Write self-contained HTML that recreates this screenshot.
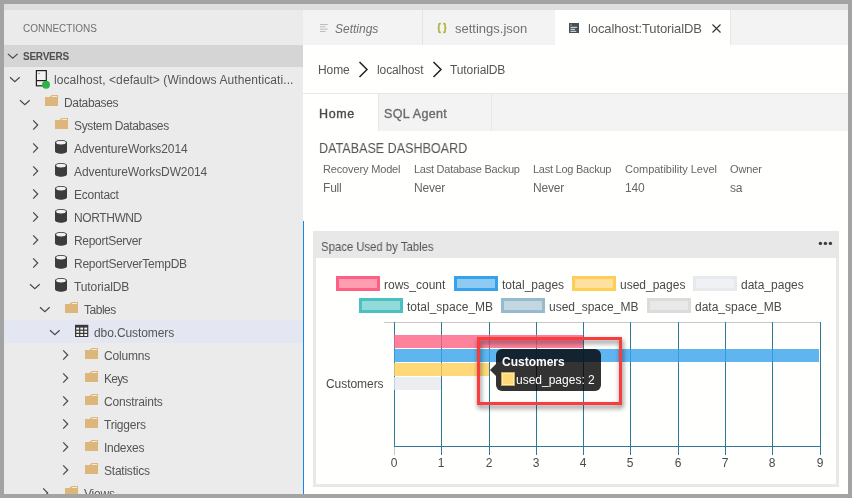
<!DOCTYPE html>
<html><head><meta charset="utf-8">
<style>
*{box-sizing:border-box;margin:0;padding:0}
html,body{width:852px;height:498px;overflow:hidden;background:#fff}
body{position:relative;font-family:"Liberation Sans",sans-serif;color:#555}
.m{will-change:transform}
.a{position:absolute}
.bd{position:absolute;background:#a3a3a3;z-index:50}
#band{left:0;top:0;width:852px;height:10px;background:#dedede}
#side{left:0;top:10px;width:303px;height:488px;background:#ebebeb}
#conn{left:23px;top:23px;font-size:10px;color:#6f6f6f}
#servers{left:0;top:45px;width:303px;height:22px;background:#d5d5d5}
#servers span{position:absolute;left:23px;top:6px;font-size:10px;font-weight:bold;letter-spacing:-0.25px;color:#505050}
.row{position:absolute;left:0;width:303px;height:23px}
.row.sel{background:#e4e6f1}
.row .rs{position:absolute;left:0;top:0;overflow:visible}
.row .lbl{position:absolute;top:6px;font-size:12px;letter-spacing:-0.1px;color:#555;white-space:nowrap}
#editor{left:303px;top:10px;width:549px;height:488px;background:#fffffe}
#tabs{left:303px;top:10px;width:549px;height:35px;background:#f3f3f3}
.tab{position:absolute;top:10px;height:35px}
.tabtxt{position:absolute;top:21px;font-size:13px;color:#707070;white-space:nowrap}
#bluel{left:303px;top:221px;width:1px;height:277px;background:#1a85e8}
.bc{position:absolute;top:63px;font-size:12px;letter-spacing:-0.1px;color:#555;white-space:nowrap}
#dtabs{left:303px;top:93px;width:549px;height:38px;background:#f3f3f3;border-top:1px solid #e8e8e8}
.dtab{position:absolute;top:107px;font-size:12.5px;font-weight:normal;-webkit-text-stroke:0.35px currentColor;white-space:nowrap}
.prop{position:absolute;font-size:11px;letter-spacing:-0.15px;color:#666;white-space:nowrap}
.val{position:absolute;top:181px;font-size:12px;letter-spacing:-0.2px;color:#666;white-space:nowrap}
#panel{left:313px;top:231px;width:526px;height:256px;background:#e8e8e8}
#pin{left:316px;top:258px;width:520px;height:226px;background:#fffffe}
#ptitle{left:321px;top:240px;font-size:12.6px;color:#555;white-space:nowrap;transform:scaleX(0.9);transform-origin:0 0}
.dot{position:absolute;top:242px;width:4px;height:4px;border-radius:50%;background:#424242}
.lg{position:absolute;width:44px;height:15px;border:3px solid}
.lt{position:absolute;font-size:12px;color:#4a4a4a;white-space:nowrap}
.gl{position:absolute;width:1px;background:#2e7a98}
.xl{position:absolute;top:456px;font-size:12px;color:#4a4a4a;width:20px;text-align:center}
.bar{position:absolute;left:394px;height:13px}
</style></head><body>
<svg width="0" height="0" style="position:absolute">
<defs>
<symbol id="tw-down" viewBox="0 0 11 11"><path d="M0.5 3 L5.5 8 L10.5 3" fill="none" stroke="#424242" stroke-width="1.1"/></symbol>
<symbol id="tw-right" viewBox="0 0 11 11"><path d="M3 0.5 L8 5.5 L3 10.5" fill="none" stroke="#424242" stroke-width="1.1"/></symbol>
<symbol id="ic-folder" viewBox="0 0 16 16"><path d="M2 4 H6.5 L8 2 H15 V13 H2 Z" fill="#dcb67a" stroke="#f4f4f4" stroke-width="0.8"/><path d="M8.6 3.4 H14" stroke="#f6f1e6" stroke-width="1.1"/></symbol>
<symbol id="ic-db" viewBox="0 0 16 16"><path d="M2 3.5 C2 1.5 14 1.5 14 3.5 V14 C14 16.4 2 16.4 2 14 Z" fill="#3c3c3c" stroke="#f4f4f4" stroke-width="0.6"/><ellipse cx="8" cy="3.9" rx="5" ry="1.6" fill="#f2f2f2"/></symbol>
<symbol id="ic-server" viewBox="0 0 16 16"><rect x="3" y="0.5" width="10" height="15" fill="none" stroke="#2a2a2a" stroke-width="1.2"/><path d="M3 10.5 H13" stroke="#2a2a2a" stroke-width="1.2"/><rect x="5" y="2.5" width="1" height="1" fill="#555"/><circle cx="12.5" cy="15" r="4" fill="#2dae4a"/></symbol>
<symbol id="ic-table" viewBox="0 0 16 16"><rect x="2" y="3" width="13" height="12" fill="#3c3c3c" stroke="#f6f6f6" stroke-width="0.6"/><g fill="#f0f0f0"><rect x="3.2" y="6" width="3" height="2"/><rect x="7.2" y="6" width="3" height="2"/><rect x="11.2" y="6" width="3" height="2"/><rect x="3.2" y="9" width="3" height="2"/><rect x="7.2" y="9" width="3" height="2"/><rect x="11.2" y="9" width="3" height="2"/><rect x="3.2" y="12" width="3" height="2"/><rect x="7.2" y="12" width="3" height="2"/><rect x="11.2" y="12" width="3" height="2"/></g></symbol>
</defs></svg>

<div id="band" class="a"></div>
<div id="side" class="a"></div>
<div id="conn" class="a m">CONNECTIONS</div>
<div id="servers" class="a"><svg class="a" style="left:0;top:0;width:30px;height:22px;overflow:visible"><path d="M7.9 8.9 L12.75 13.3 L17.6 8.9" fill="none" stroke="#484848" stroke-width="1.2"/></svg><span class="m">SERVERS</span></div>
<div class="row" style="top:67px"><svg class="rs" width="303" height="23"><path d="M10 10.2 L14.85 14.6 L19.7 10.2" fill="none" stroke="#484848" stroke-width="1.2"/><g transform="translate(35.8,0)"><rect x="0.6" y="3.6" width="9.9" height="15.2" fill="#f2f2f2" stroke="#1e1e1e" stroke-width="1.2"/><path d="M0.6 13.6 H10.5" stroke="#1e1e1e" stroke-width="1.2"/><circle cx="3.2" cy="6.5" r="0.8" fill="#888"/><circle cx="10.2" cy="17.8" r="4" fill="#2db24a"/></g></svg><span class="m lbl" style="left:54px;letter-spacing:0.09px">localhost, &lt;default&gt; (Windows Authenticati...</span></div>
<div class="row" style="top:90px"><svg class="rs" width="303" height="23"><path d="M20 10.2 L24.85 14.6 L29.7 10.2" fill="none" stroke="#484848" stroke-width="1.2"/><g transform="translate(45,0)"><path d="M0 7 H4.6 L6.6 5 H13 V16 H0 Z" fill="#dcb67a"/><path d="M6.9 6.5 H12" stroke="#f3ecdc" stroke-width="1"/></g></svg><span class="m lbl" style="left:64px;letter-spacing:-0.35px">Databases</span></div>
<div class="row" style="top:113px"><svg class="rs" width="303" height="23"><path d="M33.2 7.4 L37.7 12 L33.2 16.6" fill="none" stroke="#484848" stroke-width="1.2"/><g transform="translate(55,0)"><path d="M0 7 H4.6 L6.6 5 H13 V16 H0 Z" fill="#dcb67a"/><path d="M6.9 6.5 H12" stroke="#f3ecdc" stroke-width="1"/></g></svg><span class="m lbl" style="left:74px;letter-spacing:-0.37px">System Databases</span></div>
<div class="row" style="top:136px"><svg class="rs" width="303" height="23"><path d="M33.2 7.4 L37.7 12 L33.2 16.6" fill="none" stroke="#484848" stroke-width="1.2"/><g transform="translate(55,0)"><path d="M0 6.7 C0 3.2 12 3.2 12 6.7 V15 C12 18.6 0 18.6 0 15 Z" fill="#3c3c3c"/><ellipse cx="6" cy="6.6" rx="4.9" ry="1.9" fill="#f2f2f2"/></g></svg><span class="m lbl" style="left:74px;letter-spacing:-0.09px">AdventureWorks2014</span></div>
<div class="row" style="top:159px"><svg class="rs" width="303" height="23"><path d="M33.2 7.4 L37.7 12 L33.2 16.6" fill="none" stroke="#484848" stroke-width="1.2"/><g transform="translate(55,0)"><path d="M0 6.7 C0 3.2 12 3.2 12 6.7 V15 C12 18.6 0 18.6 0 15 Z" fill="#3c3c3c"/><ellipse cx="6" cy="6.6" rx="4.9" ry="1.9" fill="#f2f2f2"/></g></svg><span class="m lbl" style="left:74px;letter-spacing:-0.10px">AdventureWorksDW2014</span></div>
<div class="row" style="top:182px"><svg class="rs" width="303" height="23"><path d="M33.2 7.4 L37.7 12 L33.2 16.6" fill="none" stroke="#484848" stroke-width="1.2"/><g transform="translate(55,0)"><path d="M0 6.7 C0 3.2 12 3.2 12 6.7 V15 C12 18.6 0 18.6 0 15 Z" fill="#3c3c3c"/><ellipse cx="6" cy="6.6" rx="4.9" ry="1.9" fill="#f2f2f2"/></g></svg><span class="m lbl" style="left:74px;letter-spacing:-0.26px">Econtact</span></div>
<div class="row" style="top:205px"><svg class="rs" width="303" height="23"><path d="M33.2 7.4 L37.7 12 L33.2 16.6" fill="none" stroke="#484848" stroke-width="1.2"/><g transform="translate(55,0)"><path d="M0 6.7 C0 3.2 12 3.2 12 6.7 V15 C12 18.6 0 18.6 0 15 Z" fill="#3c3c3c"/><ellipse cx="6" cy="6.6" rx="4.9" ry="1.9" fill="#f2f2f2"/></g></svg><span class="m lbl" style="left:74px;letter-spacing:-0.41px">NORTHWND</span></div>
<div class="row" style="top:228px"><svg class="rs" width="303" height="23"><path d="M33.2 7.4 L37.7 12 L33.2 16.6" fill="none" stroke="#484848" stroke-width="1.2"/><g transform="translate(55,0)"><path d="M0 6.7 C0 3.2 12 3.2 12 6.7 V15 C12 18.6 0 18.6 0 15 Z" fill="#3c3c3c"/><ellipse cx="6" cy="6.6" rx="4.9" ry="1.9" fill="#f2f2f2"/></g></svg><span class="m lbl" style="left:74px;letter-spacing:-0.30px">ReportServer</span></div>
<div class="row" style="top:251px"><svg class="rs" width="303" height="23"><path d="M33.2 7.4 L37.7 12 L33.2 16.6" fill="none" stroke="#484848" stroke-width="1.2"/><g transform="translate(55,0)"><path d="M0 6.7 C0 3.2 12 3.2 12 6.7 V15 C12 18.6 0 18.6 0 15 Z" fill="#3c3c3c"/><ellipse cx="6" cy="6.6" rx="4.9" ry="1.9" fill="#f2f2f2"/></g></svg><span class="m lbl" style="left:74px;letter-spacing:-0.25px">ReportServerTempDB</span></div>
<div class="row" style="top:274px"><svg class="rs" width="303" height="23"><path d="M30 10.2 L34.85 14.6 L39.7 10.2" fill="none" stroke="#484848" stroke-width="1.2"/><g transform="translate(55,0)"><path d="M0 6.7 C0 3.2 12 3.2 12 6.7 V15 C12 18.6 0 18.6 0 15 Z" fill="#3c3c3c"/><ellipse cx="6" cy="6.6" rx="4.9" ry="1.9" fill="#f2f2f2"/></g></svg><span class="m lbl" style="left:74px;letter-spacing:-0.10px">TutorialDB</span></div>
<div class="row" style="top:297px"><svg class="rs" width="303" height="23"><path d="M40 10.2 L44.85 14.6 L49.7 10.2" fill="none" stroke="#484848" stroke-width="1.2"/><g transform="translate(65,0)"><path d="M0 7 H4.6 L6.6 5 H13 V16 H0 Z" fill="#dcb67a"/><path d="M6.9 6.5 H12" stroke="#f3ecdc" stroke-width="1"/></g></svg><span class="m lbl" style="left:84px;letter-spacing:-0.48px">Tables</span></div>
<div class="row sel" style="top:320px"><svg class="rs" width="303" height="23"><path d="M50 10.2 L54.85 14.6 L59.7 10.2" fill="none" stroke="#484848" stroke-width="1.2"/><g transform="translate(75,0)"><rect x="0" y="4.8" width="13.3" height="12.2" fill="#383838"/><rect x="1.3" y="7.6" width="2.8" height="2" fill="#f4f4f4"/><rect x="5.3" y="7.6" width="2.8" height="2" fill="#f4f4f4"/><rect x="9.3" y="7.6" width="2.8" height="2" fill="#f4f4f4"/><rect x="1.3" y="10.8" width="2.8" height="2" fill="#f4f4f4"/><rect x="5.3" y="10.8" width="2.8" height="2" fill="#f4f4f4"/><rect x="9.3" y="10.8" width="2.8" height="2" fill="#f4f4f4"/><rect x="1.3" y="14.0" width="2.8" height="2" fill="#f4f4f4"/><rect x="5.3" y="14.0" width="2.8" height="2" fill="#f4f4f4"/><rect x="9.3" y="14.0" width="2.8" height="2" fill="#f4f4f4"/></g></svg><span class="m lbl" style="left:94px;letter-spacing:-0.10px">dbo.Customers</span></div>
<div class="row" style="top:343px"><svg class="rs" width="303" height="23"><path d="M63.2 7.4 L67.7 12 L63.2 16.6" fill="none" stroke="#484848" stroke-width="1.2"/><g transform="translate(85,0)"><path d="M0 7 H4.6 L6.6 5 H13 V16 H0 Z" fill="#dcb67a"/><path d="M6.9 6.5 H12" stroke="#f3ecdc" stroke-width="1"/></g></svg><span class="m lbl" style="left:104px;letter-spacing:-0.18px">Columns</span></div>
<div class="row" style="top:366px"><svg class="rs" width="303" height="23"><path d="M63.2 7.4 L67.7 12 L63.2 16.6" fill="none" stroke="#484848" stroke-width="1.2"/><g transform="translate(85,0)"><path d="M0 7 H4.6 L6.6 5 H13 V16 H0 Z" fill="#dcb67a"/><path d="M6.9 6.5 H12" stroke="#f3ecdc" stroke-width="1"/></g></svg><span class="m lbl" style="left:104px;letter-spacing:-0.77px">Keys</span></div>
<div class="row" style="top:389px"><svg class="rs" width="303" height="23"><path d="M63.2 7.4 L67.7 12 L63.2 16.6" fill="none" stroke="#484848" stroke-width="1.2"/><g transform="translate(85,0)"><path d="M0 7 H4.6 L6.6 5 H13 V16 H0 Z" fill="#dcb67a"/><path d="M6.9 6.5 H12" stroke="#f3ecdc" stroke-width="1"/></g></svg><span class="m lbl" style="left:104px;letter-spacing:-0.19px">Constraints</span></div>
<div class="row" style="top:412px"><svg class="rs" width="303" height="23"><path d="M63.2 7.4 L67.7 12 L63.2 16.6" fill="none" stroke="#484848" stroke-width="1.2"/><g transform="translate(85,0)"><path d="M0 7 H4.6 L6.6 5 H13 V16 H0 Z" fill="#dcb67a"/><path d="M6.9 6.5 H12" stroke="#f3ecdc" stroke-width="1"/></g></svg><span class="m lbl" style="left:104px;letter-spacing:-0.23px">Triggers</span></div>
<div class="row" style="top:435px"><svg class="rs" width="303" height="23"><path d="M63.2 7.4 L67.7 12 L63.2 16.6" fill="none" stroke="#484848" stroke-width="1.2"/><g transform="translate(85,0)"><path d="M0 7 H4.6 L6.6 5 H13 V16 H0 Z" fill="#dcb67a"/><path d="M6.9 6.5 H12" stroke="#f3ecdc" stroke-width="1"/></g></svg><span class="m lbl" style="left:104px;letter-spacing:-0.27px">Indexes</span></div>
<div class="row" style="top:458px"><svg class="rs" width="303" height="23"><path d="M63.2 7.4 L67.7 12 L63.2 16.6" fill="none" stroke="#484848" stroke-width="1.2"/><g transform="translate(85,0)"><path d="M0 7 H4.6 L6.6 5 H13 V16 H0 Z" fill="#dcb67a"/><path d="M6.9 6.5 H12" stroke="#f3ecdc" stroke-width="1"/></g></svg><span class="m lbl" style="left:104px;letter-spacing:-0.23px">Statistics</span></div>
<div class="row" style="top:481px"><svg class="rs" width="303" height="23"><path d="M43.2 7.4 L47.7 12 L43.2 16.6" fill="none" stroke="#484848" stroke-width="1.2"/><g transform="translate(65,0)"><path d="M0 7 H4.6 L6.6 5 H13 V16 H0 Z" fill="#dcb67a"/><path d="M6.9 6.5 H12" stroke="#f3ecdc" stroke-width="1"/></g></svg><span class="m lbl" style="left:84px;letter-spacing:-0.20px">Views</span></div>

<div id="editor" class="a"></div>
<div id="tabs" class="a"></div>
<!-- settings tab -->
<div class="a" style="left:422px;top:10px;width:1px;height:35px;background:#e4e4e4"></div>
<svg class="a" style="left:319px;top:23px;width:10px;height:10px" viewBox="0 0 10 10"><path d="M1 1.5H8.7M1 3.8H6.5M1 6.2H8.7M1 8.5H6.5" stroke="#bcbcbc" stroke-width="1"/></svg>
<div class="tabtxt m" style="left:335px;top:22px;font-style:italic;font-size:12px">Settings</div>
<svg class="a" style="left:436px;top:22px;width:12px;height:12px" viewBox="0 0 12 12"><path d="M4.8 1.6 H4 Q2.9 1.6 2.9 2.7 V4.9 Q2.9 6 1.6 6 Q2.9 6 2.9 7.1 V9.3 Q2.9 10.4 4 10.4 H4.8 M7.2 1.6 H8 Q9.1 1.6 9.1 2.7 V4.9 Q9.1 6 10.4 6 Q9.1 6 9.1 7.1 V9.3 Q9.1 10.4 8 10.4 H7.2" fill="none" stroke="#b0b232" stroke-width="1.6"/></svg>
<div class="tabtxt m" style="left:455px">settings.json</div>
<div class="a" style="left:555px;top:10px;width:175px;height:35px;background:#fffffe"></div>
<svg class="a" style="left:569px;top:23px;width:10px;height:10px" viewBox="0 0 10 10"><rect x="0" y="0" width="10" height="10" fill="#465057"/><path d="M1.5 2H2.5M1.5 4.3H8M1.5 6.3H6M1.5 8.3H7.3" stroke="#fff" stroke-width="0.9"/></svg>
<div class="tabtxt m" style="left:588px;color:#5a5a5a;letter-spacing:-0.1px">localhost:TutorialDB</div>
<div class="a" style="left:730px;top:10px;width:1px;height:35px;background:#e6e6e6"></div>
<svg class="a" style="left:712px;top:24px;width:9px;height:9px" viewBox="0 0 9 9"><path d="M0.5 0.5L8.5 8.5M8.5 0.5L0.5 8.5" stroke="#333" stroke-width="1.1"/></svg>

<!-- breadcrumb -->
<div class="bc m" style="left:318px">Home</div>
<svg class="a" style="left:358px;top:61px;width:11px;height:17px" viewBox="0 0 11 17"><path d="M1.5 1 L9 8.5 L1.5 16" fill="none" stroke="#222" stroke-width="1.5"/></svg>
<div class="bc m" style="left:377px">localhost</div>
<svg class="a" style="left:432px;top:61px;width:11px;height:17px" viewBox="0 0 11 17"><path d="M1.5 1 L9 8.5 L1.5 16" fill="none" stroke="#222" stroke-width="1.5"/></svg>
<div class="bc m" style="left:450px">TutorialDB</div>

<!-- dashboard tabs -->
<div id="dtabs" class="a"></div>
<div class="a" style="left:303px;top:94px;width:75px;height:37px;background:#fffffe"></div>
<div class="a" style="left:378px;top:94px;width:1px;height:37px;background:#e6e6e6"></div>
<div class="a" style="left:491px;top:94px;width:1px;height:37px;background:#e6e6e6"></div>
<div class="dtab m" style="left:319px;color:#4a4a4a;letter-spacing:0.6px">Home</div>
<div class="dtab m" style="left:384px;color:#6a6a6a;letter-spacing:0.35px">SQL Agent</div>

<div class="a m" style="left:319px;top:140px;font-size:14.2px;color:#555;transform:scaleX(0.885);transform-origin:0 0">DATABASE DASHBOARD</div>
<div class="prop m" style="left:323px;top:163px">Recovery Model</div>
<div class="prop m" style="left:414px;top:163px;letter-spacing:-0.25px">Last Database Backup</div>
<div class="prop m" style="left:533px;top:163px;letter-spacing:-0.25px">Last Log Backup</div>
<div class="prop m" style="left:625px;top:163px;letter-spacing:-0.02px">Compatibility Level</div>
<div class="prop m" style="left:730px;top:163px">Owner</div>
<div class="val m" style="left:323px">Full</div>
<div class="val m" style="left:414px">Never</div>
<div class="val m" style="left:533px">Never</div>
<div class="val m" style="left:625px">140</div>
<div class="val m" style="left:730px">sa</div>

<div id="bluel" class="a"></div>

<!-- chart panel -->
<div id="panel" class="a"></div>
<div id="pin" class="a"></div>
<div id="ptitle" class="a m">Space Used by Tables</div>
<svg class="a" style="left:815px;top:238px;width:20px;height:12px" viewBox="0 0 20 12"><circle cx="5.4" cy="5.4" r="1.7" fill="#3c3c3c"/><circle cx="10.4" cy="5.4" r="1.7" fill="#3c3c3c"/><circle cx="15.4" cy="5.4" r="1.7" fill="#3c3c3c"/></svg>

<!-- legend -->
<div class="lg" style="left:336px;top:276px;border-color:#ff5f82;background:#ff9db1"></div>
<div class="lt m" style="left:384px;top:278px">rows_count</div>
<div class="lg" style="left:454px;top:276px;border-color:#36a2eb;background:#8fcaf3"></div>
<div class="lt m" style="left:502px;top:278px">total_pages</div>
<div class="lg" style="left:572px;top:276px;border-color:#ffce56;background:#ffe19f"></div>
<div class="lt m" style="left:620px;top:278px">used_pages</div>
<div class="lg" style="left:693px;top:276px;border-color:#e7e9ed;background:#f0f1f4"></div>
<div class="lt m" style="left:741px;top:278px">data_pages</div>
<div class="lg" style="left:359px;top:298px;border-color:#4bc0c0;background:#93dbdb"></div>
<div class="lt m" style="left:407px;top:300px">total_space_MB</div>
<div class="lg" style="left:501px;top:298px;border-color:#97bbcd;background:#c2d7e2"></div>
<div class="lt m" style="left:549px;top:300px">used_space_MB</div>
<div class="lg" style="left:647px;top:298px;border-color:#dcdcdc;background:#e9e9e9"></div>
<div class="lt m" style="left:695px;top:300px">data_space_MB</div>

<!-- chart -->
<div class="a" style="left:384px;top:322px;width:437px;height:1px;background:#c8c8c8"></div>
<div class="gl" style="left:394px;top:322px;height:124px"></div>
<div class="a" style="left:394px;top:446px;width:1px;height:9px;background:#c8c8c8"></div>
<div class="gl" style="left:441px;top:322px;height:124px"></div>
<div class="a" style="left:441px;top:446px;width:1px;height:9px;background:#2e7a98"></div>
<div class="gl" style="left:489px;top:322px;height:124px"></div>
<div class="a" style="left:489px;top:446px;width:1px;height:9px;background:#2e7a98"></div>
<div class="gl" style="left:536px;top:322px;height:124px"></div>
<div class="a" style="left:536px;top:446px;width:1px;height:9px;background:#2e7a98"></div>
<div class="gl" style="left:583px;top:322px;height:124px"></div>
<div class="a" style="left:583px;top:446px;width:1px;height:9px;background:#2e7a98"></div>
<div class="gl" style="left:630px;top:322px;height:124px"></div>
<div class="a" style="left:630px;top:446px;width:1px;height:9px;background:#2e7a98"></div>
<div class="gl" style="left:678px;top:322px;height:124px"></div>
<div class="a" style="left:678px;top:446px;width:1px;height:9px;background:#2e7a98"></div>
<div class="gl" style="left:725px;top:322px;height:124px"></div>
<div class="a" style="left:725px;top:446px;width:1px;height:9px;background:#2e7a98"></div>
<div class="gl" style="left:772px;top:322px;height:124px"></div>
<div class="a" style="left:772px;top:446px;width:1px;height:9px;background:#2e7a98"></div>
<div class="gl" style="left:820px;top:322px;height:124px"></div>
<div class="a" style="left:820px;top:446px;width:1px;height:9px;background:#2e7a98"></div>
<div class="a" style="left:394px;top:446px;width:427px;height:1px;background:#2e7a98"></div>
<div class="bar" style="top:335px;width:189px;background:rgba(255,99,132,0.8)"></div>
<div class="bar" style="top:349px;width:425px;background:rgba(54,162,235,0.8)"></div>
<div class="bar" style="top:363px;width:95px;background:rgba(255,206,86,0.8)"></div>
<div class="bar" style="top:377px;width:47px;background:rgba(231,233,237,0.8)"></div>
<div class="a m" style="left:326px;top:377px;font-size:12px;color:#4a4a4a;letter-spacing:-0.05px">Customers</div>
<div class="xl m" style="left:383.8px">0</div>
<div class="xl m" style="left:430.8px">1</div>
<div class="xl m" style="left:478.8px">2</div>
<div class="xl m" style="left:525.8px">3</div>
<div class="xl m" style="left:572.8px">4</div>
<div class="xl m" style="left:619.8px">5</div>
<div class="xl m" style="left:667.8px">6</div>
<div class="xl m" style="left:714.8px">7</div>
<div class="xl m" style="left:761.8px">8</div>
<div class="xl m" style="left:809.8px">9</div>

<!-- red highlight + tooltip -->
<div class="a" style="left:477px;top:337px;width:145px;height:68px;border:3px solid #fa3c3c;filter:drop-shadow(1.5px 3px 2.5px rgba(0,0,0,0.55));z-index:8"></div>
<div class="a" style="left:496px;top:349px;width:105px;height:42px;background:rgba(0,0,0,0.8);border-radius:6px;z-index:6"></div>
<div class="a" style="left:490px;top:364px;width:0;height:0;border-top:6px solid transparent;border-bottom:6px solid transparent;border-right:6px solid rgba(0,0,0,0.8);z-index:6"></div>
<div class="a m" style="left:502px;top:355px;font-size:12px;font-weight:bold;color:#fff;z-index:7">Customers</div>
<div class="a" style="left:501px;top:372px;width:14px;height:14px;background:#ffd878;border:1px solid #c9a650;box-shadow:inset 0 0 0 1px #ffeab0;z-index:7"></div>
<div class="a m" style="left:516px;top:373px;font-size:12px;color:#fff;z-index:7">used_pages: 2</div>

<div class="bd" style="left:0;top:0;width:852px;height:4px"></div>
<div class="bd" style="left:0;top:494px;width:852px;height:4px"></div>
<div class="bd" style="left:0;top:0;width:4px;height:498px"></div>
<div class="bd" style="left:848px;top:0;width:4px;height:498px"></div>
</body></html>
